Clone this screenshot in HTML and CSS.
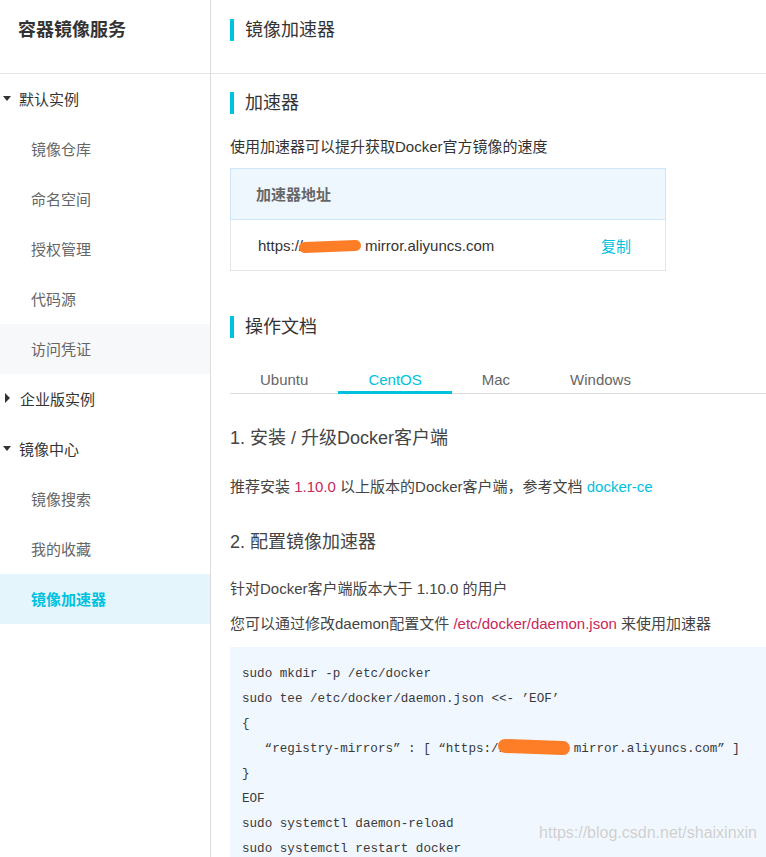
FILE: index.html
```html
<!DOCTYPE html>
<html lang="zh-CN">
<head>
<meta charset="utf-8">
<title>容器镜像服务</title>
<link rel="stylesheet" href="styles.css">
</head>
<body>
<div class="app">
  <aside class="sidebar">
    <div class="side-title">容器镜像服务</div>
    <nav class="side-nav">
      <div class="group"><span class="tri-down"></span><span>默认实例</span></div>
      <div class="item">镜像仓库</div>
      <div class="item">命名空间</div>
      <div class="item">授权管理</div>
      <div class="item">代码源</div>
      <div class="item hover">访问凭证</div>
      <div class="group"><span class="tri-right"></span><span>企业版实例</span></div>
      <div class="group"><span class="tri-down"></span><span>镜像中心</span></div>
      <div class="item">镜像搜索</div>
      <div class="item">我的收藏</div>
      <div class="item active">镜像加速器</div>
    </nav>
  </aside>
  <main class="main">
    <header class="main-head">
      <h1 class="bar-title">镜像加速器</h1>
    </header>
    <div class="content">
      <h2 class="bar-title sec-accel">加速器</h2>
      <p class="desc">使用加速器可以提升获取Docker官方镜像的速度</p>
      <div class="addr-table">
        <div class="addr-head">加速器地址</div>
        <div class="addr-row">
          <span class="addr">https://<span class="redact r1"></span>mirror.aliyuncs.com</span>
          <span class="copy">复制</span>
        </div>
      </div>
      <h2 class="bar-title sec-doc">操作文档</h2>
      <div class="tabs">
        <span class="tab">Ubuntu</span>
        <span class="tab active">CentOS</span>
        <span class="tab">Mac</span>
        <span class="tab">Windows</span>
      </div>
      <h3 class="step step1">1. 安装 / 升级Docker客户端</h3>
      <p class="para p1">推荐安装 <span class="hl">1.10.0</span> 以上版本的Docker客户端，参考文档 <span class="link">docker-ce</span></p>
      <h3 class="step step2">2. 配置镜像加速器</h3>
      <p class="para p2">针对Docker客户端版本大于 1.10.0 的用户</p>
      <p class="para p3">您可以通过修改daemon配置文件 <span class="hl">/etc/docker/daemon.json</span> 来使用加速器</p>
      <div class="code">
<pre>sudo mkdir -p /etc/docker
sudo tee /etc/docker/daemon.json &lt;&lt;-<span class="fo">’</span>EOF<span class="fc">’</span>
{
  <span class="fo">“</span>registry-mirrors<span class="fc">”</span>: [<span class="fo">“</span>https://<span class="redact r2"></span> mirror.aliyuncs.com<span class="fc">”</span>]
}
EOF
sudo systemctl daemon-reload
sudo systemctl restart docker</pre>
        <span class="watermark">https://blog.csdn.net/shaixinxin</span>
      </div>
    </div>
  </main>
</div>
</body>
</html>
```

FILE: styles.css
```css
* { box-sizing: border-box; }
html, body { margin: 0; padding: 0; }
body {
  font-family: "Liberation Sans", "Noto Sans CJK SC", sans-serif;
  color: #333;
  background: #fff;
  overflow: hidden;
  height: 857px;
}
.app { display: flex; min-height: 857px; }

/* Sidebar */
.sidebar {
  width: 211px;
  flex: none;
  border-right: 1px solid #dcdcdc;
}
.side-title {
  height: 74px;
  border-bottom: 1px solid #e5e5e5;
  padding: 18px 0 0 18px;
  font-size: 18px;
  line-height: 24px;
  font-weight: bold;
  color: #333;
}
.side-nav { display: flex; flex-direction: column; }
.group, .item {
  height: 50px;
  display: flex;
  align-items: center;
  font-size: 15px;
  padding-bottom: 2px;
}
.group { padding-left: 3px; color: #333; }
.tri-down {
  width: 0; height: 0;
  border-left: 4.5px solid transparent;
  border-right: 4.5px solid transparent;
  border-top: 5px solid #333;
}
.tri-down + span { margin-left: 8px; }
.tri-right {
  width: 0; height: 0;
  border-left: 5px solid #333;
  border-top: 5px solid transparent;
  border-bottom: 5px solid transparent;
  margin-left: 2px;
}
.tri-right + span { margin-left: 10px; }
.item { padding-left: 31px; color: #666; }
.item.hover { background: #f7f8fa; }
.item.active { background: #e4f6fb; color: #00c1de; font-weight: bold; }

/* Main */
.main { flex: 1; min-width: 0; }
.main-head {
  height: 74px;
  border-bottom: 1px solid #e5e5e5;
  padding: 19px 0 0 19px;
}
.bar-title {
  margin: 0;
  font-weight: normal;
  font-size: 18px;
  line-height: 22px;
  height: 22px;
  border-left: 4px solid #00c1de;
  padding-left: 11px;
  color: #333;
}
.content { padding-left: 19px; }
.sec-accel { margin-top: 18px; }
.desc { margin: 22px 0 0; font-size: 15px; line-height: 22px; color: #333; }

.addr-table {
  margin-top: 10px;
  width: 436px;
  border: 1px solid #e5e5e5;
}
.addr-head {
  height: 52px;
  background: #eff7fe;
  border: 1px solid #cfe5fa;
  margin: -1px -1px 0;
  padding-left: 25px;
  padding-bottom: 2px;
  display: flex;
  align-items: center;
  font-size: 15px;
  font-weight: bold;
  color: #666;
}
.addr-row {
  height: 50px;
  display: flex;
  align-items: center;
  justify-content: space-between;
  padding: 0 34px 0 27px;
  font-size: 15px;
  color: #333;
}
.copy { color: #00c1de; }
.redact {
  display: inline-block;
  background: #fd7e27;
  border-radius: 7px;
  vertical-align: middle;
}
.r1 { width: 62px; height: 11px; margin: 0 4px 0 -4px; transform: rotate(-2deg); }
.r2 { width: 72px; height: 14px; margin: -4px -4px 0 -8px; transform: rotate(2deg); }

.sec-doc { margin-top: 45px; }
.tabs {
  margin-top: 24px;
  display: flex;
  border-bottom: 1px solid #ddd;
}
.tab {
  padding: 8px 30px 1px;
  line-height: 20px;
  font-size: 15px;
  color: #666;
  border-bottom: 3px solid transparent;
  margin-bottom: -1px;
}
.tab.active { color: #00c1de; border-bottom-color: #00c1de; }

.step {
  margin: 0;
  font-weight: normal;
  font-size: 18px;
  line-height: 26px;
  color: #444;
}
.step1 { margin-top: 31px; }
.step2 { margin-top: 31px; }
.para { margin: 0; font-size: 15px; line-height: 22px; color: #444; }
.p1 { margin-top: 25px; }
.p2 { margin-top: 23px; }
.p3 { margin-top: 13px; }
.hl { color: #c8285a; }
.link { color: #00c1de; }

.code {
  position: relative;
  margin-top: 12px;
  background: #f0f7fe;
  padding: 15px 0 12px 12px;
}
.code pre {
  margin: 0;
  font-family: "Liberation Mono", "Noto Sans CJK SC", monospace;
  font-size: 12.6px;
  line-height: 25px;
  color: #3a3a3a;
}
.fo, .fc {
  display: inline-block;
  width: 15px;
}
.fo { text-align: right; }
.fc { text-align: left; }
.watermark {
  position: absolute;
  top: 177px;
  right: 9px;
  font-size: 16px;
  color: rgba(190, 190, 190, 0.75);
  text-shadow: 0 0 1px #fff;
}
```
